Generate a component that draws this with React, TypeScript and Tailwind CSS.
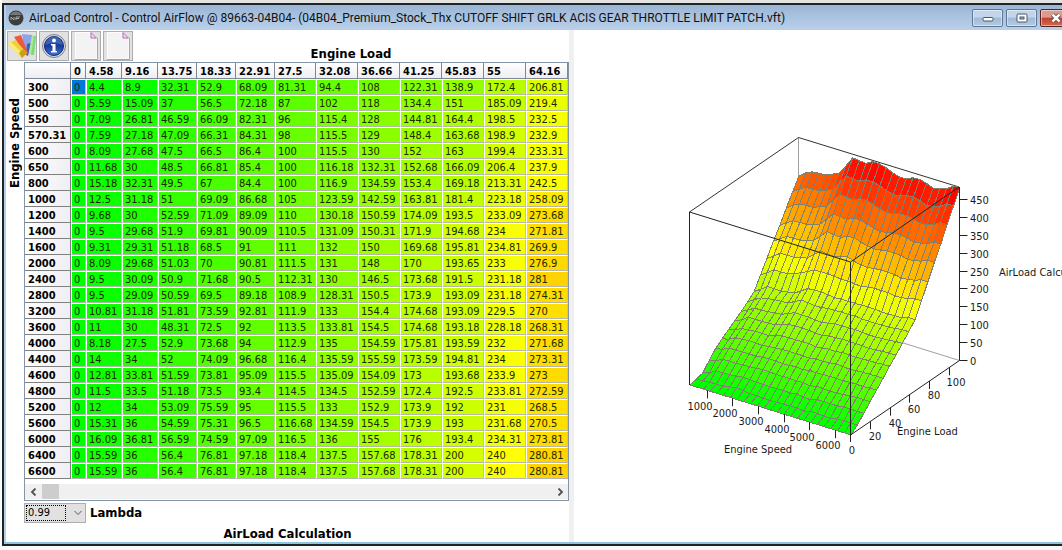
import React from "react";

const LOADS = ["0", "4.58", "9.16", "13.75", "18.33", "22.91", "27.5", "32.08", "36.66", "41.25", "45.83", "55", "64.16"];

const ROWS: [string, string][] = [
  ["300", "0 4.4 8.9 32.31 52.9 68.09 81.31 94.4 108 122.31 138.9 172.4 206.81"],
  ["500", "0 5.59 15.09 37 56.5 72.18 87 102 118 134.4 151 185.09 219.4"],
  ["550", "0 7.09 26.81 46.59 66.09 82.31 96 115.4 128 144.81 164.4 198.5 232.5"],
  ["570.31", "0 7.59 27.18 47.09 66.31 84.31 98 115.5 129 148.4 163.68 198.9 232.9"],
  ["600", "0 8.09 27.68 47.5 66.5 86.4 100 115.5 130 152 163 199.4 233.31"],
  ["650", "0 11.68 30 48.5 66.81 85.4 100 116.18 132.31 152.68 166.09 206.4 237.9"],
  ["800", "0 15.18 32.31 49.5 67 84.4 100 116.9 134.59 153.4 169.18 213.31 242.5"],
  ["1000", "0 12.5 31.18 51 69.09 86.68 105 123.59 142.59 163.81 181.4 223.18 258.09"],
  ["1200", "0 9.68 30 52.59 71.09 89.09 110 130.18 150.59 174.09 193.5 233.09 273.68"],
  ["1400", "0 9.5 29.68 51.9 69.81 90.09 110.5 131.09 150.31 171.9 194.68 234 271.81"],
  ["1600", "0 9.31 29.31 51.18 68.5 91 111 132 150 169.68 195.81 234.81 269.9"],
  ["2000", "0 8.09 29.68 51.03 70 90.81 111.5 131 148 170 193.65 233 276.9"],
  ["2400", "0 9.5 30.09 50.9 71.68 90.5 112.31 130 146.5 173.68 191.5 231.18 281"],
  ["2800", "0 9.5 29.09 50.59 69.5 89.18 108.9 128.31 150.5 173.9 193.09 231.18 274.31"],
  ["3200", "0 10.81 31.18 51.81 73.59 92.81 111.9 133 154.4 174.68 193.09 229.5 270"],
  ["3600", "0 11 30 48.31 72.5 92 113.5 133.81 154.5 174.68 193.18 228.18 268.31"],
  ["4000", "0 8.18 27.5 52.9 73.68 94 112.9 135 154.59 175.81 193.59 232 271.68"],
  ["4400", "0 14 34 52 74.09 96.68 116.4 135.59 155.59 173.59 194.81 234 273.31"],
  ["4600", "0 12.81 33.81 51.59 73.81 95.09 115.5 135.09 154.09 173 193.68 233.9 273"],
  ["4800", "0 11.5 33.5 51.18 73.5 93.4 114.5 134.5 152.59 172.4 192.5 233.81 272.59"],
  ["5200", "0 12 34 53.09 75.59 95 115.5 133 152.9 173.9 192 231 268.5"],
  ["5600", "0 15.31 36 54.59 75.31 96.5 116.68 134.59 154.5 173.9 193 231.68 270.5"],
  ["6000", "0 16.09 36.81 56.59 74.59 97.09 116.5 136 155 176 193.4 234.31 273.81"],
  ["6400", "0 15.59 36 56.4 76.81 97.18 118.4 137.5 157.68 178.31 200 240 280.81"],
  ["6600", "0 15.59 36 56.4 76.81 97.18 118.4 137.5 157.68 178.31 200 240 280.81"],
];

// Values at full load, one for each engine speed.
const PEAK = [376, 391, 399, 401, 402, 410, 419, 445, 473, 471, 469, 480, 479, 474, 466, 460, 461, 470, 471, 466, 458, 462, 468, 482, 483];
const RISE = [0.21, 0.4, 0.61, 0.81, 1];

const SURFACE = ROWS.map(([, line], i) => {
  const known = line.split(" ").map(Number);
  const last = known[known.length - 1];
  return [...known, ...RISE.map((f) => last + (PEAK[i] - last) * f)];
});

function heat(v: number) {
  const r = Math.round(Math.min(255, (v / 240) * 255));
  const g = Math.round(Math.max(0, Math.min(255, 255 * (1 - (v - 240) / 240))));
  return `rgb(${r},${g},0)`;
}

function project(i: number, j: number, z: number): [number, number] {
  return [690 + (161 * i) / 24 + (109 * j) / 17, 385 + (50 * i) / 24 - (74.5 * j) / 17 - z * 0.358];
}

function PlotSurface() {
  const faces: React.ReactNode[] = [];
  for (let j = 16; j >= 0; j--) {
    for (let i = 0; i < 24; i++) {
      const corners = [[i, j], [i + 1, j], [i + 1, j + 1], [i, j + 1]];
      const zs = corners.map(([a, b]) => SURFACE[a][b]);
      const mean = (zs[0] + zs[1] + zs[2] + zs[3]) / 4;
      const points = corners.map(([a, b], k) => project(a, b, zs[k]).map((n) => n.toFixed(1)).join(",")).join(" ");
      faces.push(<polygon key={`${i}-${j}`} points={points} fill={heat(mean < 30 ? mean : mean + 12)} />);
    }
  }
  return <g stroke="#80806c" strokeWidth="1" strokeLinejoin="round" shapeRendering="crispEdges">{faces}</g>;
}

const SPEED_TICKS: [string, number, number, number][] = [
  ["1000", 707.5, 700, 410], ["2000", 732.5, 725, 417], ["3000", 758.5, 751, 425],
  ["4000", 784.5, 777, 433], ["5000", 809.5, 802, 441], ["6000", 835.5, 828, 449],
];
const LOAD_TICKS: [string, number, number, number][] = [
  ["20", 870.5, 875, 440], ["40", 890.5, 895, 427], ["60", 909.5, 914, 413],
  ["80", 929.5, 934, 399], ["100", 949.5, 956, 386],
];

function Chart() {
  return (
    <svg className="block h-[511px] w-[488px] shrink-0" viewBox="574 30 488 511" role="img" aria-label="AirLoad Calculation surface">
      <g stroke="#a0a0a0" fill="none">
        <path d="M798.500 137.500V310.500L959.500 360.500" />
      </g>
      <path d="M689.500 212L798.500 137.500L959 187" stroke="#333" fill="none" />
      <PlotSurface />
      <g stroke="#222" fill="none">
        <path d="M689.500 385V212L850.500 262L959 187" />
        <path d="M850.500 262V442" />
        <path d="M959.500 187V360.500L850.500 435" />
        {SPEED_TICKS.map(([t, x]) => {
          const y = 385 + ((x - 690) * 50) / 161;
          return <path key={t} d={`M${x} ${y}v8`} />;
        })}
        {LOAD_TICKS.map(([t, x]) => {
          const y = 435 - ((x - 850.5) * 74.5) / 109;
          return <path key={t} d={`M${x} ${y}v8`} />;
        })}
        {Array.from({ length: 10 }, (_, k) => (
          <path key={k} d={`M959.500 ${Math.round(360 - k * 17.9) + 0.5}h8`} />
        ))}
      </g>
      <g className="text-[11px]" fill="#1a1a1a">
        <g textAnchor="middle">
          {SPEED_TICKS.map(([t, , x, y]) => <text key={t} x={x} y={y}>{t}</text>)}
          {LOAD_TICKS.map(([t, , x, y]) => <text key={t} x={x} y={y}>{t}</text>)}
          <text x="852" y="454">0</text>
        </g>
        {Array.from({ length: 10 }, (_, k) => (
          <text key={k} x="970" y={Math.round(365 - k * 17.9)}>{k * 50}</text>
        ))}
        <text x="724" y="453">Engine Speed</text>
        <text x="897" y="435">Engine Load</text>
        <text x="999" y="276">AirLoad Calculation</text>
      </g>
    </svg>
  );
}

function ToolButton({ label, children }: { label: string; children: React.ReactNode }) {
  return (
    <button type="button" aria-label={label} className="flex size-[30px] items-center justify-center overflow-hidden border border-[#adadad] bg-[#e1e1e1]">
      {children}
    </button>
  );
}

function PaletteIcon() {
  return (
    <svg className="size-7 shrink-0" viewBox="0 0 28 28">
      <path d="M22 3l6 1-2 18-8 0z" fill="#a8e8a0" />
      <path d="M26 4l2 0-2 19-3 0z" fill="#7edb78" />
      <path d="M14 2l10 1-4 20-3 0z" fill="#8aa4ee" />
      <path d="M19 12l3.500-1-2.500 13-2-1z" fill="#3f5fae" />
      <path d="M6 5l7-2 7 18-2 2z" fill="#f0583a" />
      <path d="M0 12l7-4 12 13-5 5z" fill="#f2cf3a" />
      <path d="M0 12l3-2 12 12-2 3z" fill="#f7ee7a" />
      <path d="M11 21l4-4 4 4-5 5z" fill="#c89f18" />
    </svg>
  );
}

function InfoIcon() {
  return (
    <svg className="size-[26px] shrink-0" viewBox="0 0 26 26">
      <defs>
        <linearGradient id="info" x1="0" y1="0" x2="0" y2="1">
          <stop offset="0" stopColor="#1c3f9a" />
          <stop offset="0.5" stopColor="#1a3c9c" />
          <stop offset="1" stopColor="#3b74e0" />
        </linearGradient>
      </defs>
      <circle cx="13" cy="13" r="11.500" fill="#d7dbe4" stroke="#7b8190" />
      <circle cx="13" cy="13" r="9.500" fill="url(#info)" stroke="#12296b" />
      <path d="M4.500 12a8.500 8.500 0 0 1 17 0q-8.500-4-17 0z" fill="#6d8ed0" opacity=".45" />
      <circle cx="13" cy="7.500" r="1.900" fill="#fff" />
      <path d="M10 11h4.500v7H16v1.500h-6V18h1.500v-5.500H10z" fill="#fff" />
    </svg>
  );
}

function PageIcon() {
  return (
    <svg className="h-7 w-6 shrink-0" viewBox="0 0 24 28">
      <path d="M1.500 0.500H17L23 6.500V27H1.500z" fill="#f3f3f3" stroke="#fdfdfd" />
      <path d="M1 27.500H23.500V6" fill="none" stroke="#a8a8a8" />
      <path d="M17 0.500V6H22.500z" fill="#f3dcf3" stroke="#b565b5" />
    </svg>
  );
}

const COL = "w-[42px]";
const WIDTHS = ["w-[15px]", "w-[36px]", "w-[36px]", "w-[39px]", "w-[39px]", "w-[39px]", "w-[41px]", COL, COL, COL, COL, COL, COL];

function DataTable() {
  return (
    <table className="w-full table-fixed border-separate border-spacing-0 text-left text-[11px] leading-[12px] text-[#1a2a00]">
      <colgroup>
        <col className="w-[46px]" />
        {WIDTHS.map((w, k) => <col key={k} className={w} />)}
      </colgroup>
      <thead>
        <tr className="text-black">
          <th aria-label="Engine Speed" className="border-r border-b border-[#7f8794] bg-linear-to-b from-white to-[#eeeef1]" />
          {LOADS.map((l) => (
            <th key={l} scope="col" className="border-r border-b border-[#7f8794] bg-linear-to-b from-white to-[#eeeef1] p-0 pt-[3px] pl-[3px] font-bold">{l}</th>
          ))}
        </tr>
      </thead>
      <tbody>
        {ROWS.map(([speed, line], r) => (
          <tr key={speed}>
            <th scope="row" className="border-r border-b border-[#808080] bg-linear-to-r from-white to-[#efeff3] p-0 pt-[3px] pl-[3px] font-bold text-black">{speed}</th>
            {line.split(" ").map((v, c) => (
              <td
                key={c}
                className="border-t border-r border-b border-l border-t-white border-r-[#c0c0c0] border-b-[#b4b4b4] border-l-white p-0 pt-[2px] pl-[2px] whitespace-nowrap"
                style={{ backgroundColor: r === 0 && c === 0 ? "#0078d7" : heat(Number(v)) }}
              >
                {v}
              </td>
            ))}
          </tr>
        ))}
      </tbody>
    </table>
  );
}

function TitleButton({ label, close, children }: { label: string; close?: boolean; children: React.ReactNode }) {
  return (
    <button
      type="button"
      aria-label={label}
      className={
        "flex h-[18px] w-[31px] items-center justify-center rounded-[2px] border shadow-[inset_0_0_0_1px_rgba(255,255,255,0.45)] " +
        (close
          ? "border-[#5b2222] bg-linear-to-b from-[#dd9a8e] from-45% via-[#c0402c] via-50% to-[#d06a50]"
          : "border-[#5f7591] bg-linear-to-b from-[#c3d5ea] from-45% via-[#9fb9d6] via-50% to-[#b4cbe5]")
      }
    >
      {children}
    </button>
  );
}

export default function App() {
  return (
    <div className="min-h-screen overflow-hidden bg-[#fbfbf6] pl-[2px] font-['DejaVu_Sans_Condensed','DejaVu_Sans',sans-serif] text-black">
      <div className="h-[3px] bg-[#e4e4e2]" />
      <main className="border-t-2 border-b-2 border-l-2 border-[#1c2429]">
        <div className="border-b-2 border-l-2 border-b-[#8fc4e0] border-l-[#b9cde8]">
          <header className="flex h-[25px] items-center gap-[5px] overflow-hidden bg-linear-to-b from-[#9ab6d5] to-[#bad0ea] pl-[2px]">
            <svg className="size-4 shrink-0" viewBox="0 0 16 16" aria-hidden="true">
              <circle cx="8" cy="8" r="7.500" fill="#3d3d3d" />
              <path d="M2 5a7 7 0 0 1 12 0z" fill="#777" />
              <path d="M3 10V7l3 3V7M8 10V7h4M8 8.500h3" stroke="#a9a9a9" fill="none" />
            </svg>
            <h1 className="min-w-0 flex-1 truncate font-['Roboto',sans-serif] text-[12px] text-[#111]">
              AirLoad Control - Control AirFlow @ 89663-04B04- (04B04_Premium_Stock_Thx CUTOFF SHIFT GRLK ACIS GEAR THROTTLE LIMIT PATCH.vft)
            </h1>
            <div className="-mr-[9px] flex shrink-0 gap-[3px]">
              <TitleButton label="Minimize">
                <svg className="h-3 w-3" viewBox="0 0 12 12"><rect x="1" y="5.500" width="10" height="3.500" rx="1" fill="#fff" stroke="#4b5768" /></svg>
              </TitleButton>
              <TitleButton label="Maximize">
                <svg className="h-3 w-3" viewBox="0 0 12 12"><rect x="1" y="2" width="10" height="8" rx="1" fill="#fff" stroke="#4b5768" /><rect x="4" y="5" width="4" height="2" fill="#9fb9d6" stroke="#4b5768" /></svg>
              </TitleButton>
              <TitleButton label="Close" close>
                <svg className="h-3 w-3" viewBox="0 0 12 12">
                  <path d="M2.500 2.500l7 7M9.500 2.500l-7 7" stroke="#4b3a3a" strokeWidth="4" />
                  <path d="M2.500 2.500l7 7M9.500 2.500l-7 7" stroke="#fff" strokeWidth="2.500" />
                </svg>
              </TitleButton>
            </div>
          </header>

          <div className="flex bg-white">
            <section className="w-[563px] shrink-0">
              <div className="flex h-8 pt-px pl-px">
                <div className="flex gap-[2px]">
                  <ToolButton label="Colours"><PaletteIcon /></ToolButton>
                  <ToolButton label="Information"><InfoIcon /></ToolButton>
                  <ToolButton label="Copy page"><PageIcon /></ToolButton>
                  <ToolButton label="Paste page"><PageIcon /></ToolButton>
                </div>
                <h2 className="flex-1 self-end text-center text-[13px] leading-4 font-bold">Engine Load</h2>
              </div>
              <div className="flex">
                <div className="flex w-[18px] justify-center pt-9">
                  <h2 className="rotate-180 self-start text-[13px] leading-4 font-bold whitespace-nowrap [writing-mode:vertical-rl]">Engine Speed</h2>
                </div>
                <div className="min-w-0 flex-1">
                  <div className="border border-[#8595a8] pb-px">
                    <DataTable />
                    <div className="mt-[5px] flex h-[15px] items-center bg-[#f0f0f0]">
                      <button type="button" aria-label="Scroll left" className="flex h-full w-[17px] items-center justify-center">
                        <svg className="size-2" viewBox="0 0 8 8"><path d="M5.500 0.500L2 4l3.500 3.500" stroke="#505050" strokeWidth="1.800" fill="none" /></svg>
                      </button>
                      <div className="h-full w-[17px] bg-[#cdcdcd]" />
                      <button type="button" aria-label="Scroll right" className="ml-auto flex h-full w-[17px] items-center justify-center">
                        <svg className="size-2" viewBox="0 0 8 8"><path d="M2.500 0.500L6 4l-3.500 3.500" stroke="#505050" strokeWidth="1.800" fill="none" /></svg>
                      </button>
                    </div>
                  </div>
                  <div className="mt-[2px] flex items-center gap-1">
                    <div className="relative h-5 w-[62px]">
                      <select id="lambda" defaultValue="0.99" className="block h-5 w-full appearance-none border border-[#adadad] bg-[#e1e1e1] pl-[3px] text-[11px] leading-[18px]">
                        <option>0.99</option>
                        <option>1.00</option>
                      </select>
                      <span className="pointer-events-none absolute top-[2px] left-[2px] h-4 w-10 border border-dotted border-black" />
                      <svg className="pointer-events-none absolute top-[6px] right-[4px] size-2" viewBox="0 0 8 8"><path d="M0.500 2l3.500 3.500L7.500 2" stroke="#555" fill="none" /></svg>
                    </div>
                    <label htmlFor="lambda" className="text-[13px] leading-4 font-bold">Lambda</label>
                  </div>
                </div>
              </div>
              <h2 className="mt-[3px] text-center text-[13px] leading-4 font-bold">AirLoad Calculation</h2>
            </section>
            <div className="w-[5px] shrink-0 bg-[#f0f0f0]" />
            <section className="min-w-0 flex-1 overflow-hidden"><Chart /></section>
          </div>
        </div>
      </main>
    </div>
  );
}
